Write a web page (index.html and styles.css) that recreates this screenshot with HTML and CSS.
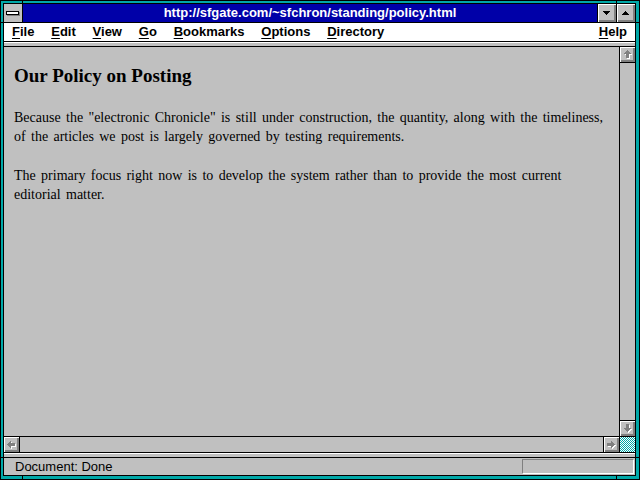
FILE: index.html
```html
<!DOCTYPE html>
<html>
<head>
<meta charset="utf-8">
<title>Netscape - policy</title>
<link rel="stylesheet" href="styles.css">
</head>
<body>
<div class="window">
  <span class="tick tick-v tick-top tick-l"></span>
  <span class="tick tick-v tick-top tick-r"></span>
  <span class="tick tick-v tick-bottom tick-l"></span>
  <span class="tick tick-v tick-bottom tick-r"></span>
  <span class="tick tick-h tick-left tick-upper"></span>
  <span class="tick tick-h tick-right tick-upper"></span>
  <span class="tick tick-h tick-left tick-lower"></span>
  <span class="tick tick-h tick-right tick-lower"></span>
  <div class="frame">
    <div class="titlebar">
      <div class="sysmenu"><span class="sysbar"></span></div>
      <div class="caption">http://sfgate.com/~sfchron/standing/policy.html</div>
      <div class="tbtn">
        <svg width="7" height="4" viewBox="0 0 7 4"><rect x="0" y="0" width="7" height="1"/><rect x="1" y="1" width="5" height="1"/><rect x="2" y="2" width="3" height="1"/><rect x="3" y="3" width="1" height="1"/></svg>
      </div>
      <div class="tbtn">
        <svg width="7" height="4" viewBox="0 0 7 4"><rect x="3" y="0" width="1" height="1"/><rect x="2" y="1" width="3" height="1"/><rect x="1" y="2" width="5" height="1"/><rect x="0" y="3" width="7" height="1"/></svg>
      </div>
    </div>
    <div class="menubar">
      <span class="mi"><u>F</u>ile</span>
      <span class="mi"><u>E</u>dit</span>
      <span class="mi"><u>V</u>iew</span>
      <span class="mi"><u>G</u>o</span>
      <span class="mi"><u>B</u>ookmarks</span>
      <span class="mi"><u>O</u>ptions</span>
      <span class="mi"><u>D</u>irectory</span>
      <span class="mi help"><u>H</u>elp</span>
    </div>
    <div class="sep"></div>
    <div class="viewport">
      <div class="page">
        <h1>Our Policy on Posting</h1>
        <p>Because the "electronic Chronicle" is still under construction, the quantity, along with the timeliness, of the articles we post is largely governed by testing requirements.</p>
        <p>The primary focus right now is to develop the system rather than to provide the most current editorial matter.</p>
      </div>
      <div class="vscroll">
        <div class="sbtn up">
          <svg width="15" height="15" viewBox="0 0 15 15">
            <g fill="#fff" transform="translate(1 1)"><rect x="7" y="3" width="1" height="1"/><rect x="6" y="4" width="3" height="1"/><rect x="5" y="5" width="5" height="1"/><rect x="4" y="6" width="7" height="1"/><rect x="6" y="7" width="3" height="4"/></g>
            <g fill="#808080"><rect x="7" y="3" width="1" height="1"/><rect x="6" y="4" width="3" height="1"/><rect x="5" y="5" width="5" height="1"/><rect x="4" y="6" width="7" height="1"/><rect x="6" y="7" width="3" height="4"/></g>
          </svg>
        </div>
        <div class="track"></div>
        <div class="sbtn down">
          <svg width="15" height="15" viewBox="0 0 15 15">
            <g fill="#fff" transform="translate(1 1)"><rect x="6" y="3" width="3" height="4"/><rect x="4" y="7" width="7" height="1"/><rect x="5" y="8" width="5" height="1"/><rect x="6" y="9" width="3" height="1"/><rect x="7" y="10" width="1" height="1"/></g>
            <g fill="#808080"><rect x="6" y="3" width="3" height="4"/><rect x="4" y="7" width="7" height="1"/><rect x="5" y="8" width="5" height="1"/><rect x="6" y="9" width="3" height="1"/><rect x="7" y="10" width="1" height="1"/></g>
          </svg>
        </div>
      </div>
    </div>
    <div class="hscroll">
      <div class="sbtn left">
        <svg width="15" height="15" viewBox="0 0 15 15">
          <g fill="#fff" transform="translate(1 1)"><rect x="3" y="7" width="1" height="1"/><rect x="4" y="6" width="1" height="3"/><rect x="5" y="5" width="1" height="5"/><rect x="6" y="4" width="1" height="7"/><rect x="7" y="6" width="4" height="3"/></g>
          <g fill="#808080"><rect x="3" y="7" width="1" height="1"/><rect x="4" y="6" width="1" height="3"/><rect x="5" y="5" width="1" height="5"/><rect x="6" y="4" width="1" height="7"/><rect x="7" y="6" width="4" height="3"/></g>
        </svg>
      </div>
      <div class="track"></div>
      <div class="sbtn right">
        <svg width="15" height="15" viewBox="0 0 15 15">
          <g fill="#fff" transform="translate(1 1)"><rect x="3" y="6" width="4" height="3"/><rect x="7" y="4" width="1" height="7"/><rect x="8" y="5" width="1" height="5"/><rect x="9" y="6" width="1" height="3"/><rect x="10" y="7" width="1" height="1"/></g>
          <g fill="#808080"><rect x="3" y="6" width="4" height="3"/><rect x="7" y="4" width="1" height="7"/><rect x="8" y="5" width="1" height="5"/><rect x="9" y="6" width="1" height="3"/><rect x="10" y="7" width="1" height="1"/></g>
        </svg>
      </div>
      <div class="grip"></div>
    </div>
    <div class="sep"></div>
    <div class="status">
      <span class="status-text">Document: Done</span>
      <div class="progress"></div>
    </div>
  </div>
</div>
</body>
</html>
```
FILE: styles.css
```css
* { box-sizing: border-box; margin: 0; padding: 0; }
html, body { width: 640px; height: 480px; overflow: hidden; }
body { background: #00a8a8; font-family: "Liberation Sans", Arial, sans-serif; color: #000; }

.window {
  position: relative;
  width: 640px;
  height: 480px;
  background: #00a8a8;
  box-shadow: inset 0 0 0 1px #000;
  padding: 3px 4px 4px 3px;
}
.tick { position: absolute; background: #000; }
.tick-v { width: 1px; height: 3px; }
.tick-h { width: 3px; height: 1px; }
.tick-top { top: 0; }
.tick-bottom { top: 476px; }
.tick-l { left: 22px; }
.tick-r { left: 616px; }
.tick-left { left: 0; }
.tick-right { left: 636px; }
.tick-upper { top: 22px; }
.tick-lower { top: 457px; }

.frame {
  height: 100%;
  border: 1px solid #000;
  background: #c0c0c0;
  display: flex;
  flex-direction: column;
}

/* title bar */
.titlebar { display: flex; height: 19px; border-bottom: 1px solid #000; flex: none; }
.sysmenu {
  width: 19px;
  border-right: 1px solid #000;
  background: #c0c0c0;
  display: flex;
  align-items: center;
  justify-content: center;
}
.sysbar {
  display: block;
  width: 13px;
  height: 4px;
  border: 1px solid #000;
  background: #fff;
  box-shadow: 1px 1px 0 #808080;
  margin: 0 1px 1px 0;
}
.caption {
  flex: 1;
  background: #0000a8;
  color: #fff;
  font-weight: bold;
  font-size: 13px;
  line-height: 18px;
  text-align: center;
  white-space: nowrap;
  overflow: hidden;
}
.tbtn {
  width: 19px;
  border-left: 1px solid #000;
  background: #c0c0c0;
  box-shadow: inset 1px 1px 0 #fff, inset -2px -2px 0 #808080;
  display: flex;
  align-items: center;
  justify-content: center;
  padding: 0 1px 1px 0;
}
.tbtn svg { display: block; fill: #000; }

/* menu bar */
.menubar {
  flex: none;
  height: 19px;
  border-bottom: 1px solid #000;
  background: #fff;
  display: flex;
  gap: 16.8px;
  padding: 0 8px;
  font-weight: bold;
  font-size: 13px;
  line-height: 18px;
  white-space: nowrap;
}
.mi u { text-decoration: underline; text-underline-offset: 2px; text-decoration-thickness: 1px; }
.help { margin-left: auto; }

.sep {
  flex: none;
  height: 5px;
  border-top: 1px solid #fff;
  border-bottom: 1px solid #000;
  background: #c0c0c0;
}

/* document area */
.viewport { flex: 1; display: flex; min-height: 0; }
.page {
  flex: 1;
  background: #c0c0c0;
  padding: 18px 10px 0 10px;
  font-family: "Liberation Serif", "Times New Roman", serif;
  color: #000;
}
.page h1 { font-size: 19px; line-height: 22px; font-weight: bold; margin-bottom: 21px; }
.page p { font-size: 14px; word-spacing: 1.85px; line-height: 19px; margin-bottom: 20px; }

.vscroll { width: 16px; border-left: 1px solid #000; display: flex; flex-direction: column; flex: none; }
.track { flex: 1; background: #c0c0c0; }
.sbtn {
  flex: none;
  width: 15px;
  height: 15px;
  background: #c0c0c0;
  box-shadow: inset 1px 1px 0 #fff, inset -2px -2px 0 #808080;
}
.sbtn svg { display: block; }
.vscroll .up { height: 16px; border-bottom: 1px solid #000; }
.vscroll .down { height: 16px; border-top: 1px solid #000; }

.hscroll {
  flex: none;
  height: 17px;
  border-top: 1px solid #000;
  border-bottom: 1px solid #000;
  display: flex;
}
.hscroll .left { width: 16px; border-right: 1px solid #000; }
.hscroll .right { width: 16px; border-left: 1px solid #000; }
.grip {
  width: 16px;
  border-left: 1px solid #000;
  background: repeating-conic-gradient(#00a8a8 0 25%, #ffffff 0 50%) 0 0 / 2px 2px;
}

/* status bar */
.status {
  flex: none;
  height: 17px;
  display: flex;
  align-items: center;
  padding-left: 11px;
  font-size: 13px;
  line-height: 17px;
  background: #c0c0c0;
}
.progress {
  margin-left: auto;
  margin-right: 1px;
  width: 112px;
  height: 15px;
  border: 1px solid;
  border-color: #808080 #fff #fff #808080;
}
```
